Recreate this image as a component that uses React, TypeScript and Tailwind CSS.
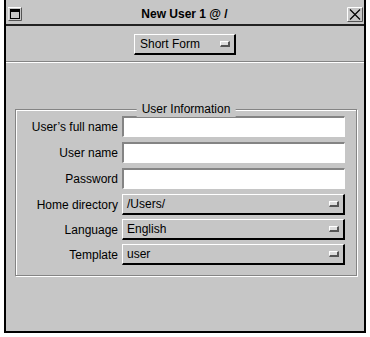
import React from "react";

const font = { fontFamily: '"Liberation Sans", Arial, sans-serif' };

function PopupKnob() {
  return (
    <span className="block h-[6px] w-[10px] border-t border-l border-white border-r-2 border-b-2 border-r-[#555] border-b-[#555] bg-[#dedede]" />
  );
}

function Popup({ value, className }: { value: string; className?: string }) {
  return (
    <div
      className={
        "flex h-[21px] items-center justify-between border-t border-l border-white border-r-2 border-b-2 border-r-black border-b-black bg-[#c6c6c6] pl-[4px] pr-[4px] " +
        (className ?? "")
      }
    >
      <span>{value}</span>
      <PopupKnob />
    </div>
  );
}

function TextField() {
  return (
    <div className="h-[21px] border-t-2 border-l-2 border-[#848484] border-r border-b border-r-white border-b-white bg-white" />
  );
}

const fields = [
  { label: "User\u2019s full name", kind: "text" },
  { label: "User name", kind: "text" },
  { label: "Password", kind: "text" },
  { label: "Home directory", kind: "popup", value: "/Users/" },
  { label: "Language", kind: "popup", value: "English" },
  { label: "Template", kind: "popup", value: "user" },
];

export default function App() {
  return (
    <div className="h-[337px] w-[370px] bg-white text-[12px] text-black" style={font}>
      <div className="ml-[4px] flex h-[333px] w-[362px] flex-col border-x-2 border-b-2 border-black bg-[#c6c6c6]">
        {/* title bar */}
        <div className="flex h-[26px] items-center border-b-2 border-[#222] pt-[4px] pl-[2px] pr-[1px]">
          <svg width="14" height="14" viewBox="0 0 14 14">
            <rect x="0" y="0" width="14" height="14" fill="#c6c6c6" />
            <path d="M0 13.5V0.5H13.5" stroke="#fff" fill="none" />
            <path d="M0.5 13.5H13.5V0.5" stroke="#555" fill="none" />
            <rect x="2.5" y="2.5" width="9" height="9" fill="#c6c6c6" stroke="#000" />
            <rect x="3" y="3" width="8" height="2" fill="#000" />
          </svg>
          <div className="flex-1 text-center font-bold">New User 1 @ /</div>
          <svg width="16" height="15" viewBox="0 0 16 15">
            <rect x="0" y="0" width="16" height="15" fill="#c6c6c6" />
            <path d="M0.5 14.5V0.5H15.5" stroke="#fff" fill="none" />
            <path d="M0.5 14.5H15.5V0.5" stroke="#555" fill="none" />
            <path d="M3 2.5L13 12.5M13 2.5L3 12.5" stroke="#000" strokeWidth="1.2" />
          </svg>
        </div>

        {/* form mode */}
        <div className="flex justify-center pt-[8px] pb-[6px]">
          <Popup value="Short Form" className="w-[102px] pr-[3px] pl-[5px]" />
        </div>
        <div className="border-t border-b border-t-[#848484] border-b-white" />

        {/* group */}
        <div className="relative mt-[46px] ml-[9px] mr-[7px] border border-[#848484] shadow-[inset_1px_1px_0_#fff,1px_1px_0_#fff]">
          <span className="absolute left-1/2 top-[-9px] -translate-x-1/2 bg-[#c6c6c6] px-[5px] leading-[16px]">
            User Information
          </span>
          <div className="grid grid-cols-[101px_223px] items-center gap-x-[4px] pt-[6px] pb-[10px] pl-[1px]">
            {fields.map((f, i) => (
              <React.Fragment key={f.label}>
                <div
                  className={
                    "text-right " + (i === 0 ? "" : i <= 3 ? "mt-[5px]" : "mt-[4px]")
                  }
                >
                  {f.label}
                </div>
                <div className={i === 0 ? "" : i <= 3 ? "mt-[5px]" : "mt-[4px]"}>
                  {f.kind === "text" ? <TextField /> : <Popup value={f.value!} />}
                </div>
              </React.Fragment>
            ))}
          </div>
        </div>
      </div>
    </div>
  );
}
